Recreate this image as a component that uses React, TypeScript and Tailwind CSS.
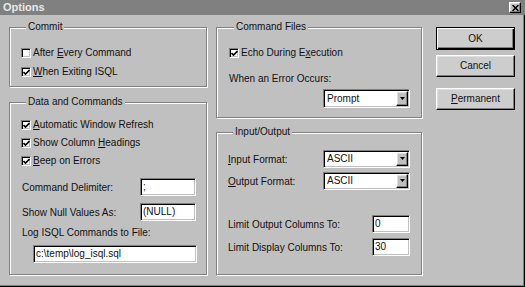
import type { ReactNode } from "react";

const sunken =
  "border border-t-[#808080] border-l-[#808080] border-r-white border-b-white shadow-[inset_1px_1px_0_#000,inset_-1px_-1px_0_#c0c0c0]";
const raised =
  "border border-t-white border-l-white border-r-black border-b-black shadow-[inset_-1px_-1px_0_#808080,inset_1px_1px_0_#dfdfdf]";

function U({ children }: { children: ReactNode }) {
  return <span className="underline underline-offset-[1px]">{children}</span>;
}

function Group({
  title,
  className,
  children,
}: {
  title: string;
  className: string;
  children: ReactNode;
}) {
  return (
    <fieldset
      className={
        "min-w-0 border border-[#808080] shadow-[inset_1px_1px_0_#fff,1px_1px_0_#fff] " +
        className
      }
    >
      <legend className="ml-[5px] px-[2px] leading-[12px] bg-[#c0c0c0]">{title}</legend>
      {children}
    </fieldset>
  );
}

function Check({ checked, children }: { checked?: boolean; children: ReactNode }) {
  return (
    <div className="flex items-center gap-[2px] h-[18px]">
      <span
        className={
          "w-[10px] h-[10px] bg-white flex items-center justify-center shrink-0 " + sunken
        }
      >
        {checked && (
          <svg width="7" height="7" viewBox="0 0 7 7">
            <path d="M0.5 3 L2.5 5 L6.5 1" fill="none" stroke="#000" strokeWidth="1.6" />
          </svg>
        )}
      </span>
      <span className="leading-[12px]">{children}</span>
    </div>
  );
}

function Field({ value, className }: { value: string; className: string }) {
  return (
    <div className={"bg-white flex items-center pl-[2px] leading-[12px] " + sunken + " " + className}>
      {value}
    </div>
  );
}

function Combo({ value, className }: { value: string; className: string }) {
  return (
    <div className={"bg-white flex items-stretch p-[1px] " + sunken + " " + className}>
      <span className="flex-1 flex items-center pl-[2px] leading-[12px]">{value}</span>
      <span className={"w-[12px] bg-[#c0c0c0] flex items-center justify-center " + raised}>
        <svg width="5" height="4" viewBox="0 0 5 4">
          <path d="M0 0 H5 L2.5 3 Z" fill="#000" />
        </svg>
      </span>
    </div>
  );
}

function Btn({ children, isDefault, className }: { children: ReactNode; isDefault?: boolean; className: string }) {
  return (
    <div
      className={
        "w-[79px] bg-[#cdcdcd] flex items-center justify-center leading-[12px] " +
        (isDefault
          ? "border border-black shadow-[inset_1px_1px_0_#fff,inset_-1px_-1px_0_#000,inset_-2px_-2px_0_#808080] "
          : raised + " ") +
        className
      }
    >
      {children}
    </div>
  );
}

export default function App() {
  return (
    <div className="w-[525px] h-[287px] bg-[#c0c0c0] flex flex-col text-[10px] text-[#111] font-['Liberation_Sans',Arial,sans-serif] shadow-[inset_-1px_-1px_0_#000,inset_-2px_-2px_0_#808080] overflow-hidden">
      <div className="h-[15px] bg-[#808080] flex items-center justify-between pl-[3px] pr-[4px] shrink-0">
        <span className="font-bold text-[11px] text-[#e8e8e8] leading-[13px]">Options</span>
        <span className={"w-[12px] h-[11px] bg-[#c0c0c0] flex items-center justify-center " + raised}>
          <svg width="7" height="6" viewBox="0 0 7 6">
            <path d="M0.5 0 L6.5 6 M6.5 0 L0.5 6" stroke="#000" strokeWidth="1.5" />
          </svg>
        </span>
      </div>

      <div className="flex pl-[9px] pt-[6px]">
        {/* left column */}
        <div className="w-[198px] flex flex-col gap-[9px]">
          <Group title="Commit" className="h-[66px] pl-[11px] pt-[11px] flex flex-col gap-[1px]">
            <Check>
              After <U>E</U>very Command
            </Check>
            <Check checked>
              <U>W</U>hen Exiting ISQL
            </Check>
          </Group>

          <Group title="Data and Commands" className="h-[179px] pl-[11px] pr-[10px] pt-[8px] flex flex-col">
            <Check checked>
              <U>A</U>utomatic Window Refresh
            </Check>
            <Check checked>
              Show Column <U>H</U>eadings
            </Check>
            <Check checked>
              <U>B</U>eep on Errors
            </Check>
            <div className="flex items-center justify-between mt-[8px] pl-[1px]">
              <span>Command Delimiter:</span>
              <Field value=";" className="w-[56px] h-[18px]" />
            </div>
            <div className="flex items-center justify-between mt-[7px] pl-[1px]">
              <span>Show Null Values As:</span>
              <Field value="(NULL)" className="w-[56px] h-[18px]" />
            </div>
            <div className="mt-[6px] pl-[1px] leading-[12px]">Log ISQL Commands to File:</div>
            <Field value="c:\temp\log_isql.sql" className="mt-[6px] ml-[12px] w-[164px] h-[18px]" />
          </Group>
        </div>

        {/* middle column */}
        <div className="w-[206px] ml-[9px] flex flex-col gap-[8px]">
          <Group title="Command Files" className="h-[97px] pl-[12px] pr-[11px] pt-[11px] flex flex-col">
            <Check checked>
              Echo During E<U>x</U>ecution
            </Check>
            <div className="mt-[11px] leading-[12px]">When an Error Occurs:</div>
            <Combo value="Prompt" className="mt-[4px] self-end w-[87px] h-[19px]" />
          </Group>

          <Group title="Input/Output" className="h-[149px] pl-[11px] pr-[11px] pt-[12px] flex flex-col">
            <div className="flex items-center justify-between">
              <span>
                <U>I</U>nput Format:
              </span>
              <Combo value="ASCII" className="w-[87px] h-[18px]" />
            </div>
            <div className="flex items-center justify-between mt-[4px]">
              <span>
                <U>O</U>utput Format:
              </span>
              <Combo value="ASCII" className="w-[87px] h-[18px]" />
            </div>
            <div className="flex items-center justify-between mt-[25px]">
              <span>Limit Output Columns To:</span>
              <Field value="0" className="w-[38px] h-[18px]" />
            </div>
            <div className="flex items-center justify-between mt-[5px]">
              <span>Limit Display Columns To:</span>
              <Field value="30" className="w-[38px] h-[18px]" />
            </div>
          </Group>
        </div>

        {/* buttons */}
        <div className="ml-[14px] pt-[6px] flex flex-col">
          <Btn isDefault className="h-[23px]">
            OK
          </Btn>
          <Btn className="h-[22px] mt-[5px]">Cancel</Btn>
          <Btn className="h-[22px] mt-[11px]">
            <U>P</U>ermanent
          </Btn>
        </div>
      </div>
    </div>
  );
}
